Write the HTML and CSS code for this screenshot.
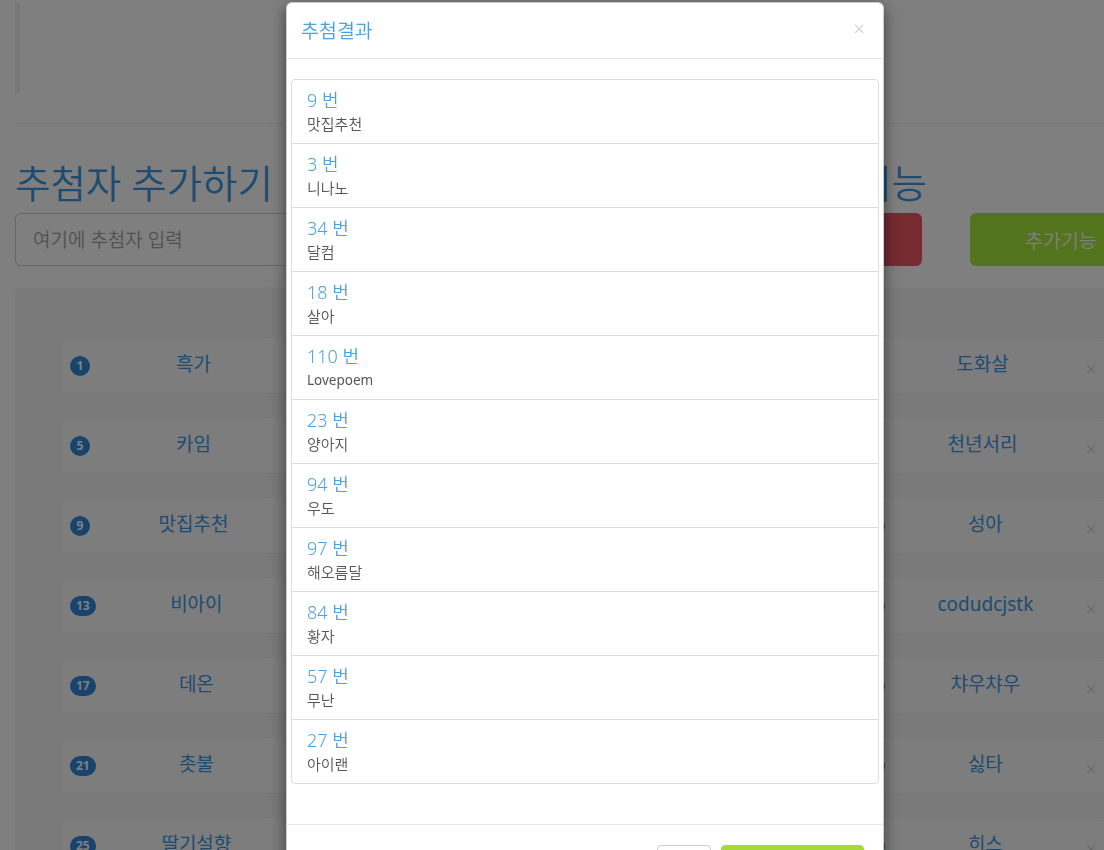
FILE: index.html
```html
<!DOCTYPE html>
<html lang="ko">
<head>
<meta charset="utf-8">
<title>추첨</title>
<link rel="stylesheet" href="styles.css">
</head>
<body>
<div class="page">
  <div class="quote"></div>
  <hr class="rule">
  <div class="title-row">
    <h1 class="title">추첨자 추가하기</h1>
    <h1 class="title">추첨 및 부가기능</h1>
  </div>
  <div class="input-row">
    <div class="input-group">
      <input class="name-input" type="text" placeholder="여기에 추첨자 입력">
      <button class="btn-red">추가하기</button>
    </div>
    <button class="btn-green">추가기능</button>
  </div>
  <div class="well">
    <div class="card"><span class="badge">1</span><span class="name">흑가</span><span class="del">×</span></div>
    <div class="card"><span class="badge">2</span><span class="name">해오름달</span><span class="del">×</span></div>
    <div class="card"><span class="badge">3</span><span class="name">니나노</span><span class="del">×</span></div>
    <div class="card"><span class="badge">4</span><span class="name">도화살</span><span class="del">×</span></div>
    <div class="card"><span class="badge">5</span><span class="name">카임</span><span class="del">×</span></div>
    <div class="card"><span class="badge">6</span><span class="name">우도</span><span class="del">×</span></div>
    <div class="card"><span class="badge">7</span><span class="name">황자</span><span class="del">×</span></div>
    <div class="card"><span class="badge">8</span><span class="name">천년서리</span><span class="del">×</span></div>
    <div class="card"><span class="badge">9</span><span class="name">맛집추천</span><span class="del">×</span></div>
    <div class="card"><span class="badge">10</span><span class="name">무난</span><span class="del">×</span></div>
    <div class="card"><span class="badge">11</span><span class="name">아이랜</span><span class="del">×</span></div>
    <div class="card"><span class="badge">12</span><span class="name">성아</span><span class="del">×</span></div>
    <div class="card"><span class="badge">13</span><span class="name">비아이</span><span class="del">×</span></div>
    <div class="card"><span class="badge">14</span><span class="name">양아지</span><span class="del">×</span></div>
    <div class="card"><span class="badge">15</span><span class="name">살아</span><span class="del">×</span></div>
    <div class="card"><span class="badge">16</span><span class="name">codudcjstk</span><span class="del">×</span></div>
    <div class="card"><span class="badge">17</span><span class="name">데온</span><span class="del">×</span></div>
    <div class="card"><span class="badge">18</span><span class="name">달컴</span><span class="del">×</span></div>
    <div class="card"><span class="badge">19</span><span class="name">Lovepoem</span><span class="del">×</span></div>
    <div class="card"><span class="badge">20</span><span class="name">챠우챠우</span><span class="del">×</span></div>
    <div class="card"><span class="badge">21</span><span class="name">촛불</span><span class="del">×</span></div>
    <div class="card"><span class="badge">22</span><span class="name">별빛</span><span class="del">×</span></div>
    <div class="card"><span class="badge">23</span><span class="name">하늘</span><span class="del">×</span></div>
    <div class="card"><span class="badge">24</span><span class="name">싫타</span><span class="del">×</span></div>
    <div class="card"><span class="badge">25</span><span class="name">딸기설향</span><span class="del">×</span></div>
    <div class="card"><span class="badge">26</span><span class="name">바람</span><span class="del">×</span></div>
    <div class="card"><span class="badge">27</span><span class="name">구름</span><span class="del">×</span></div>
    <div class="card"><span class="badge">28</span><span class="name">히스</span><span class="del">×</span></div>
  </div>
</div>

<div class="backdrop"></div>

<div class="modal">
  <div class="modal-header">
    <h4 class="modal-title">추첨결과</h4>
    <span class="close">×</span>
  </div>
  <div class="modal-body">
    <ul class="list">
      <li class="item"><h4 class="item-head">9 번</h4><p class="item-text">맛집추천</p></li>
      <li class="item"><h4 class="item-head">3 번</h4><p class="item-text">니나노</p></li>
      <li class="item"><h4 class="item-head">34 번</h4><p class="item-text">달컴</p></li>
      <li class="item"><h4 class="item-head">18 번</h4><p class="item-text">살아</p></li>
      <li class="item"><h4 class="item-head">110 번</h4><p class="item-text latin">Lovepoem</p></li>
      <li class="item"><h4 class="item-head">23 번</h4><p class="item-text">양아지</p></li>
      <li class="item"><h4 class="item-head">94 번</h4><p class="item-text">우도</p></li>
      <li class="item"><h4 class="item-head">97 번</h4><p class="item-text">해오름달</p></li>
      <li class="item"><h4 class="item-head">84 번</h4><p class="item-text">황자</p></li>
      <li class="item"><h4 class="item-head">57 번</h4><p class="item-text">무난</p></li>
      <li class="item"><h4 class="item-head">27 번</h4><p class="item-text">아이랜</p></li>
    </ul>
  </div>
  <div class="modal-footer">
    <button class="btn-default">닫기</button>
    <button class="btn-lime">추첨결과 복사하기</button>
  </div>
</div>
</body>
</html>
```
FILE: styles.css
```css
html, body {
  margin: 0;
  padding: 0;
  overflow: hidden;
  background: #ffffff;
}
body {
  font-family: "Noto Sans", "Noto Sans CJK KR", sans-serif;
  font-size: 14px;
  font-weight: 350;
  color: #333333;
  width: 1104px;
  height: 850px;
  position: relative;
}
.page {
  width: 1140px;
  padding: 0 15px;
}
.quote {
  margin-top: 3px;
  height: 90px;
  border-left: 5px solid #eeeeee;
}
.rule {
  margin: 30px 0 0;
  border: 0;
  border-top: 1px solid #eeeeee;
}
.title-row {
  width: 912px;
  display: flex;
  justify-content: space-between;
  margin-top: 37px;
}
.title {
  margin: 0;
  font-size: 38.5px;
  font-weight: 350;
  line-height: 44px;
  color: #3d96df;
}
.input-row {
  display: flex;
  margin-top: 8px;
}
.input-group {
  display: flex;
  width: 907px;
  gap: 10px;
}
.name-input {
  flex: 1;
  height: 53px;
  box-sizing: border-box;
  border: 1px solid #cccccc;
  border-radius: 6px;
  padding: 0 17px;
  font-family: inherit;
  font-weight: 350;
  font-size: 19px;
}
.name-input::placeholder {
  color: #a3a3a3;
}
.btn-red {
  width: 220px;
  height: 53px;
  border: 0;
  border-radius: 6px;
  background: #ef5560;
  color: #ffffff;
  font-family: inherit;
  font-weight: 350;
  font-size: 19px;
}
.btn-green {
  margin-left: 48px;
  width: 184px;
  height: 53px;
  border: 0;
  border-radius: 6px;
  background: #a6e63a;
  color: #ffffff;
  font-family: inherit;
  font-weight: 350;
  font-size: 19.5px;
  text-align: left;
  padding-left: 55px;
}
.well {
  margin-top: 21px;
  background: #f4f4f4;
  border-radius: 4px;
  padding: 50px 46px;
  display: grid;
  grid-template-columns: repeat(4, 255px);
  column-gap: 8px;
  row-gap: 23px;
}
.card {
  height: 57px;
  box-sizing: border-box;
  background: #fbfbfb;
  border: 1px solid #ededed;
  border-radius: 3px;
  display: flex;
  align-items: center;
  padding: 0 8px;
}
.badge {
  min-width: 20px;
  height: 20px;
  box-sizing: border-box;
  padding: 0 6px;
  border-radius: 10px;
  background: #2f86d8;
  color: #ffffff;
  font-size: 12px;
  font-weight: 700;
  line-height: 20px;
  text-align: center;
}
.name {
  flex: 1;
  text-align: center;
  font-size: 19px;
  font-weight: 400;
  line-height: 26px;
  padding-bottom: 3px;
  color: #3d96df;
}
.del {
  width: 10px;
  margin-top: 7px;
  font-size: 18px;
  line-height: 18px;
  color: #cccccc;
}
.backdrop {
  position: fixed;
  left: 0;
  top: 0;
  right: 0;
  bottom: 0;
  background: rgba(0, 0, 0, 0.5);
  z-index: 10;
}
.modal {
  position: absolute;
  left: 286px;
  top: 2px;
  width: 598px;
  box-sizing: border-box;
  background: #ffffff;
  border: 1px solid rgba(0, 0, 0, 0.2);
  border-radius: 6px;
  box-shadow: 0 5px 15px rgba(0, 0, 0, 0.5);
  z-index: 20;
}
.modal-header {
  display: flex;
  justify-content: space-between;
  align-items: center;
  padding: 15px 15px 15px 14px;
  border-bottom: 1px solid #e5e5e5;
}
.modal-title {
  margin: 0;
  font-size: 19.5px;
  font-weight: 350;
  line-height: 25px;
  color: #4aa3df;
}
.close {
  font-size: 20px;
  line-height: 20px;
  color: #c8c8c8;
  margin-right: 3px;
  padding-bottom: 4px;
}
.modal-body {
  padding: 20px 4px;
}
.list {
  list-style: none;
  margin: 0 0 20px;
  padding: 0;
}
.item {
  border: 1px solid #dddddd;
  margin-bottom: -1px;
  padding: 10px 15px;
}
.item:first-child {
  border-radius: 4px 4px 0 0;
}
.item:last-child {
  margin-bottom: 0;
  border-radius: 0 0 4px 4px;
}
.item-head {
  margin: 0 0 5px;
  font-size: 18px;
  font-weight: 350;
  line-height: 20px;
  color: #4aa3df;
}
.item-text {
  margin: 0;
  font-size: 15px;
  line-height: 18px;
  color: #555555;
}
.item-text.latin {
  font-size: 13.5px;
  font-weight: 400;
}
.modal-footer {
  border-top: 1px solid #e5e5e5;
  padding: 20px 19px;
  display: flex;
  justify-content: flex-end;
  gap: 10px;
}
.btn-default {
  width: 54px;
  height: 34px;
  border: 1px solid #cccccc;
  border-radius: 4px;
  background: #ffffff;
  font-family: inherit;
  font-size: 14px;
  color: #333333;
}
.btn-lime {
  width: 143px;
  height: 34px;
  border: 1px solid #a6da37;
  border-radius: 4px;
  background: #a6da37;
  font-family: inherit;
  font-size: 14px;
  color: #ffffff;
}
```
